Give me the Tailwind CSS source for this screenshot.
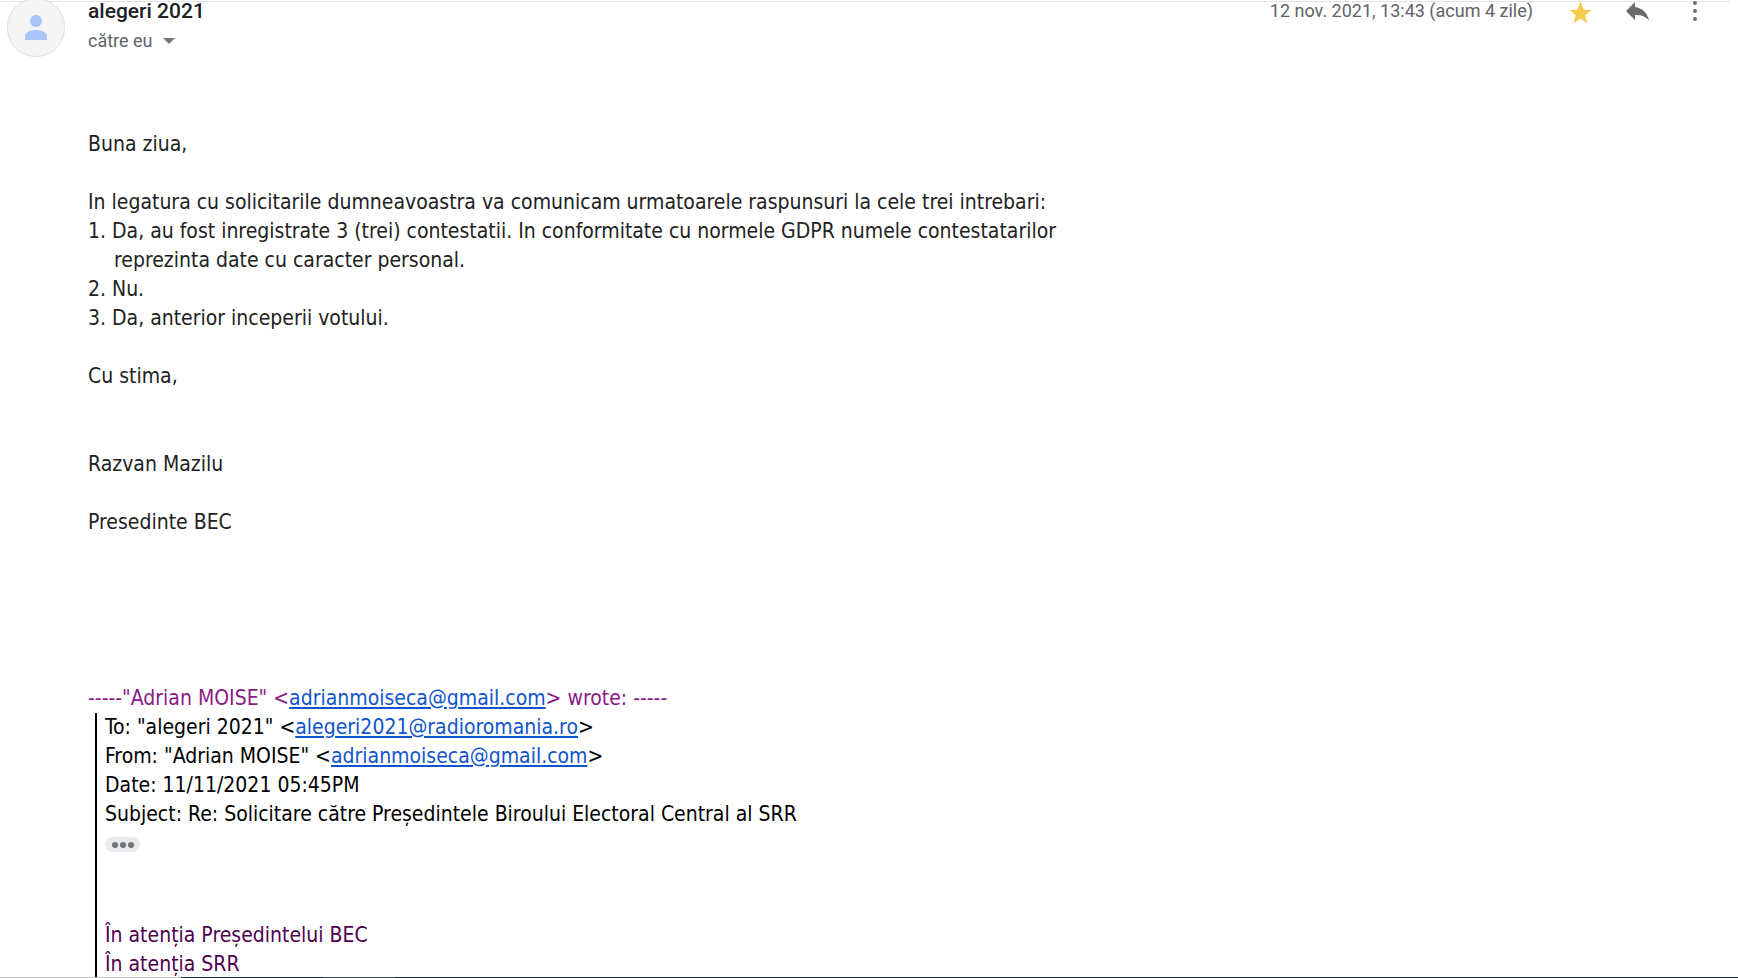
<!DOCTYPE html>
<html lang="ro">
    <head>
        <meta charset="UTF-8">
        <meta name="viewport" content="width=device-width, initial-scale=1.0">
        <title>alegeri 2021</title>
        <script src="https://cdn.jsdelivr.net/npm/@tailwindcss/browser@4"></script>
    </head>
    <body class="bg-white">
        <div class="flex h-screen flex-col overflow-hidden">
            <!--message header-->
            <header class="mt-px mr-2 flex shrink-0 border-t border-[#e4e4e4] pr-8 pl-[7px] font-['Roboto',sans-serif]">
                <div class="-mt-1 flex h-[59px] w-[58px] shrink-0 items-center justify-center rounded-full border border-[#e0e0e0] bg-[#f5f5f5]">
                    <svg class="size-9" viewBox="0 0 36 36" fill="#a8c3f5">
                        <circle cx="18" cy="11" r="6"/>
                        <path d="M7 30v-4c0-4 7-6 11-6s11 2 11 6v4z"/>
                    </svg>
                </div>
                <div class="ml-[23px] flex-1">
                    <h1 class="-mt-[3px] text-[21px] leading-6 font-medium text-[#202124]">alegeri 2021</h1>
                    <button type="button" class="mt-[6px] flex items-center gap-[10px] text-lg leading-6 text-[#5f6368]">
                        către eu
                        <svg class="h-[6px] w-3" viewBox="0 0 12 6" fill="#757575"><path d="M0 0h12L6 6z"/></svg>
                    </button>
                </div>
                <div class="-mt-px flex h-6 items-start">
                    <time datetime="2021-11-12T13:43" class="-mt-[2px] text-lg leading-6 text-[#5f6368]">12 nov. 2021, 13:43 (acum 4 zile)</time>
                    <button type="button" aria-label="Cu stea" class="ml-9">
                        <svg class="size-[23px]" viewBox="1 1 22 22" fill="#f7cb4d"><path d="M12 17.8 18.6 22.3l-2-7.6L22.6 9.7l-7.5-.4L12 1.6 8.9 9.3 1.4 9.7l6 5-2 7.6z"/></svg>
                    </button>
                    <button type="button" aria-label="Răspunde" class="ml-[34px]">
                        <svg class="h-[22px] w-6" viewBox="0 0 24 22" fill="#6b6b6b"><path d="M9 6V1L0 10l9 9v-5c6 0 11 1 14 6-1-7-6-13-14-14z"/></svg>
                    </button>
                    <button type="button" aria-label="Mai multe" class="ml-[42px]">
                        <svg class="h-[23px] w-[6px]" viewBox="0 0 6 23" fill="#6b6b6b"><circle cx="3" cy="2" r="2"/><circle cx="3" cy="10" r="2"/><circle cx="3" cy="18" r="2"/></svg>
                    </button>
                </div>
            </header>

            <!--message body-->
            <main class="flex min-h-0 flex-1 flex-col overflow-hidden pt-[73px] pl-[88px] font-['DejaVu_Sans_Condensed','DejaVu_Sans',sans-serif] text-[21px] leading-[29px] text-[#222222]">
                <p>Buna ziua,</p>
                <p class="mt-[29px]">In legatura cu solicitarile dumneavoastra va comunicam urmatoarele raspunsuri la cele trei intrebari:</p>
                <ol>
                    <li class="pl-[26px] -indent-[26px]">1. Da, au fost inregistrate 3 (trei) contestatii. In conformitate cu normele GDPR numele contestatarilor<br><span class="inline-block indent-0">reprezinta date cu caracter personal.</span></li>
                    <li>2. Nu.</li>
                    <li>3. Da, anterior inceperii votului.</li>
                </ol>
                <p class="mt-[29px]">Cu stima,</p>
                <p class="mt-[59px]">Razvan Mazilu</p>
                <p class="mt-[29px]">Presedinte BEC</p>

                <!--quoted message-->
                <p class="mt-[147px] text-[#8b1a89]">-----"Adrian MOISE" &lt;<a href="mailto:adrianmoiseca@gmail.com" class="text-[#1155cc] underline">adrianmoiseca@gmail.com</a>&gt; wrote: -----</p>
                <blockquote class="ml-[7px] flex-1 border-l-2 border-black pl-2 text-black">
                    <p>To: "alegeri 2021" &lt;<a href="mailto:alegeri2021@radioromania.ro" class="text-[#1155cc] underline">alegeri2021@radioromania.ro</a>&gt;</p>
                    <p>From: "Adrian MOISE" &lt;<a href="mailto:adrianmoiseca@gmail.com" class="text-[#1155cc] underline">adrianmoiseca@gmail.com</a>&gt;</p>
                    <p>Date: 11/11/2021 05:45PM</p>
                    <p>Subject: Re: Solicitare către Președintele Biroului Electoral Central al SRR</p>
                    <button type="button" aria-label="Afișați conținutul restrâns" class="mt-2 flex h-[15px] w-[35px] items-center justify-center rounded-full bg-[#e8eaed]">
                        <svg class="h-[6px] w-[22px]" viewBox="0 0 22 6" fill="#70757a"><circle cx="3" cy="3" r="3"/><circle cx="11" cy="3" r="3"/><circle cx="19" cy="3" r="3"/></svg>
                    </button>
                    <div class="mt-[69px] text-[#500050]">
                        <p>În atenția Președintelui BEC</p>
                        <p>În atenția SRR</p>
                    </div>
                </blockquote>
            </main>

            <!--top edge of the taskbar-->
            <footer class="flex h-px shrink-0 bg-[#1f2a33]">
                <div class="w-[181px] bg-[#c4c4c4]"></div>
                <div class="ml-[142px] w-[72px] bg-[#465363]"></div>
            </footer>
        </div>
    </body>
</html>
